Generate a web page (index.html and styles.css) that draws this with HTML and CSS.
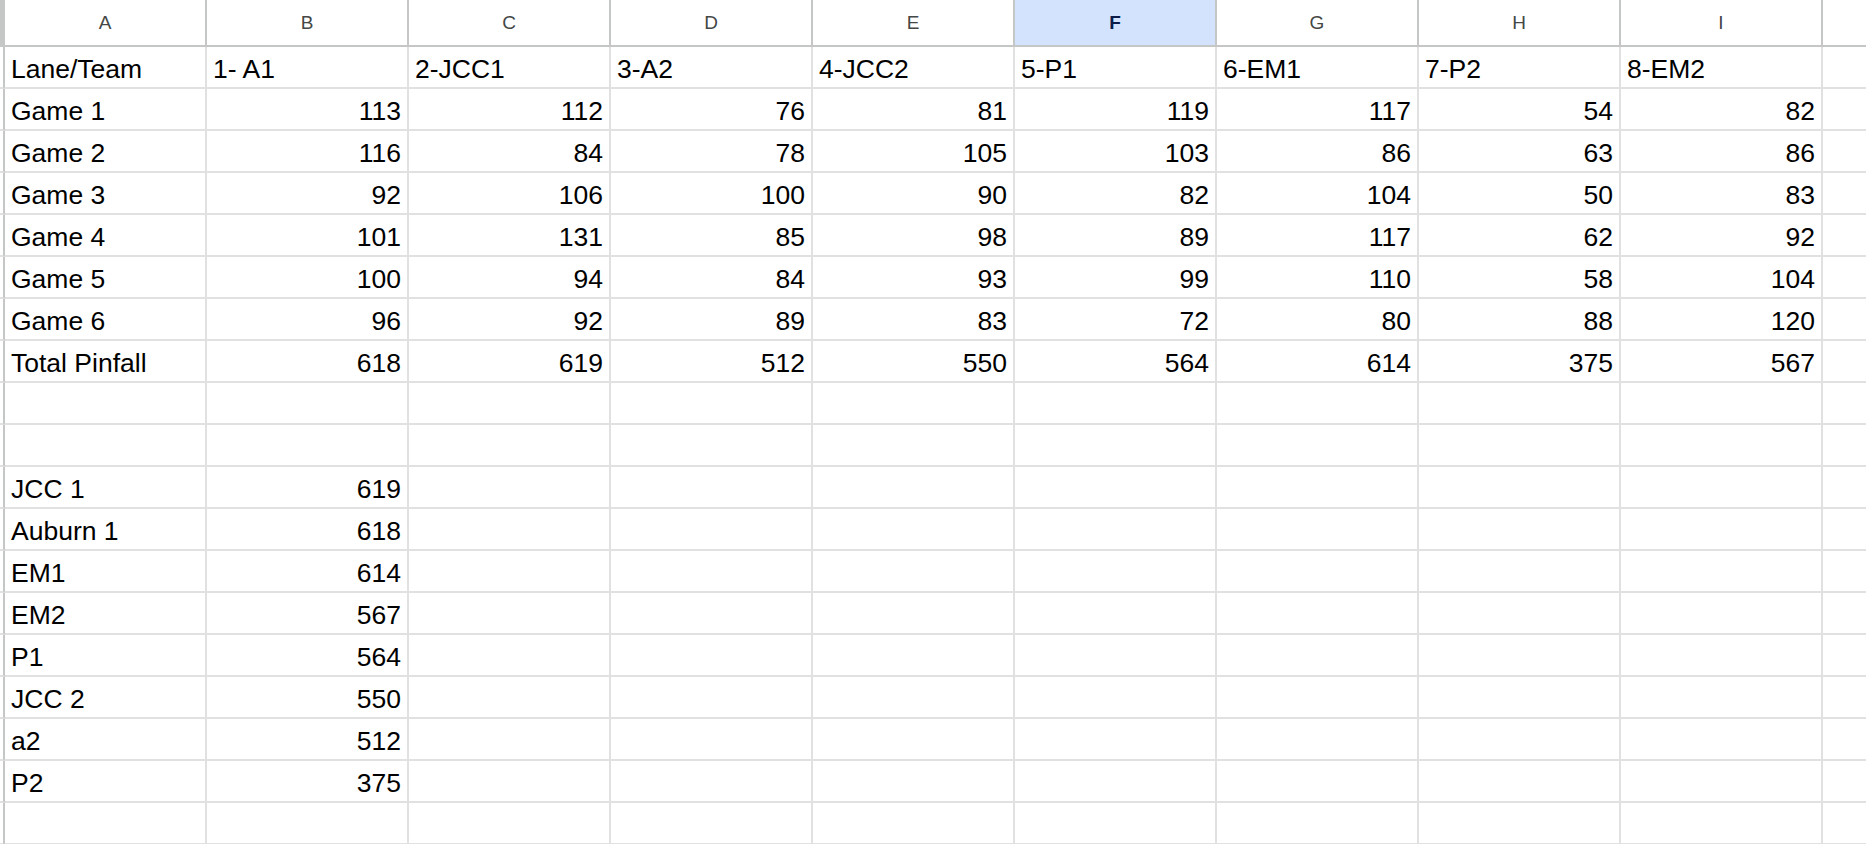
FILE: index.html
```html
<!DOCTYPE html>
<html>
<head>
<meta charset="utf-8">
<link rel="stylesheet" href="styles.css">
</head>
<body>
<div class="sheet">
  <div class="ch corner"></div>
  <div class="ch">A</div><div class="ch">B</div><div class="ch">C</div><div class="ch">D</div><div class="ch">E</div><div class="ch sel">F</div><div class="ch">G</div><div class="ch">H</div><div class="ch">I</div><div class="ch last"></div>

  <div class="rh"></div><div class="c">Lane/Team</div><div class="c">1- A1</div><div class="c">2-JCC1</div><div class="c">3-A2</div><div class="c">4-JCC2</div><div class="c">5-P1</div><div class="c">6-EM1</div><div class="c">7-P2</div><div class="c">8-EM2</div><div class="c last"></div>

  <div class="rh"></div><div class="c">Game 1</div><div class="c n">113</div><div class="c n">112</div><div class="c n">76</div><div class="c n">81</div><div class="c n">119</div><div class="c n">117</div><div class="c n">54</div><div class="c n">82</div><div class="c last"></div>

  <div class="rh"></div><div class="c">Game 2</div><div class="c n">116</div><div class="c n">84</div><div class="c n">78</div><div class="c n">105</div><div class="c n">103</div><div class="c n">86</div><div class="c n">63</div><div class="c n">86</div><div class="c last"></div>

  <div class="rh"></div><div class="c">Game 3</div><div class="c n">92</div><div class="c n">106</div><div class="c n">100</div><div class="c n">90</div><div class="c n">82</div><div class="c n">104</div><div class="c n">50</div><div class="c n">83</div><div class="c last"></div>

  <div class="rh"></div><div class="c">Game 4</div><div class="c n">101</div><div class="c n">131</div><div class="c n">85</div><div class="c n">98</div><div class="c n">89</div><div class="c n">117</div><div class="c n">62</div><div class="c n">92</div><div class="c last"></div>

  <div class="rh"></div><div class="c">Game 5</div><div class="c n">100</div><div class="c n">94</div><div class="c n">84</div><div class="c n">93</div><div class="c n">99</div><div class="c n">110</div><div class="c n">58</div><div class="c n">104</div><div class="c last"></div>

  <div class="rh"></div><div class="c">Game 6</div><div class="c n">96</div><div class="c n">92</div><div class="c n">89</div><div class="c n">83</div><div class="c n">72</div><div class="c n">80</div><div class="c n">88</div><div class="c n">120</div><div class="c last"></div>

  <div class="rh"></div><div class="c">Total Pinfall</div><div class="c n">618</div><div class="c n">619</div><div class="c n">512</div><div class="c n">550</div><div class="c n">564</div><div class="c n">614</div><div class="c n">375</div><div class="c n">567</div><div class="c last"></div>

  <div class="rh"></div><div class="c"></div><div class="c"></div><div class="c"></div><div class="c"></div><div class="c"></div><div class="c"></div><div class="c"></div><div class="c"></div><div class="c"></div><div class="c last"></div>

  <div class="rh"></div><div class="c"></div><div class="c"></div><div class="c"></div><div class="c"></div><div class="c"></div><div class="c"></div><div class="c"></div><div class="c"></div><div class="c"></div><div class="c last"></div>

  <div class="rh"></div><div class="c">JCC 1</div><div class="c n">619</div><div class="c"></div><div class="c"></div><div class="c"></div><div class="c"></div><div class="c"></div><div class="c"></div><div class="c"></div><div class="c last"></div>

  <div class="rh"></div><div class="c">Auburn 1</div><div class="c n">618</div><div class="c"></div><div class="c"></div><div class="c"></div><div class="c"></div><div class="c"></div><div class="c"></div><div class="c"></div><div class="c last"></div>

  <div class="rh"></div><div class="c">EM1</div><div class="c n">614</div><div class="c"></div><div class="c"></div><div class="c"></div><div class="c"></div><div class="c"></div><div class="c"></div><div class="c"></div><div class="c last"></div>

  <div class="rh"></div><div class="c">EM2</div><div class="c n">567</div><div class="c"></div><div class="c"></div><div class="c"></div><div class="c"></div><div class="c"></div><div class="c"></div><div class="c"></div><div class="c last"></div>

  <div class="rh"></div><div class="c">P1</div><div class="c n">564</div><div class="c"></div><div class="c"></div><div class="c"></div><div class="c"></div><div class="c"></div><div class="c"></div><div class="c"></div><div class="c last"></div>

  <div class="rh"></div><div class="c">JCC 2</div><div class="c n">550</div><div class="c"></div><div class="c"></div><div class="c"></div><div class="c"></div><div class="c"></div><div class="c"></div><div class="c"></div><div class="c last"></div>

  <div class="rh"></div><div class="c">a2</div><div class="c n">512</div><div class="c"></div><div class="c"></div><div class="c"></div><div class="c"></div><div class="c"></div><div class="c"></div><div class="c"></div><div class="c last"></div>

  <div class="rh"></div><div class="c">P2</div><div class="c n">375</div><div class="c"></div><div class="c"></div><div class="c"></div><div class="c"></div><div class="c"></div><div class="c"></div><div class="c"></div><div class="c last"></div>

  <div class="rh"></div><div class="c"></div><div class="c"></div><div class="c"></div><div class="c"></div><div class="c"></div><div class="c"></div><div class="c"></div><div class="c"></div><div class="c"></div><div class="c last"></div>
</div>
</body>
</html>
```
FILE: styles.css
```css
html, body {
  margin: 0;
  padding: 0;
  background: #ffffff;
  overflow: hidden;
}

.sheet {
  display: grid;
  grid-template-columns: 5px repeat(9, 202px) 1fr;
  grid-template-rows: 47px;
  grid-auto-rows: 42px;
  width: 1866px;
  height: 844px;
  overflow: hidden;
  font-family: "Liberation Sans", Arial, sans-serif;
}

.ch {
  box-sizing: border-box;
  border-right: 2px solid #c4c7c5;
  border-bottom: 2px solid #c4c7c5;
  display: flex;
  align-items: center;
  justify-content: center;
  font-size: 19px;
  color: #444746;
  background: #ffffff;
}

.ch.corner {
  background: #c4c7c5;
}

.ch.sel {
  background: #d3e3fd;
  color: #0b1d48;
  font-weight: bold;
}

.ch.last,
.c.last {
  border-right: none;
}

.rh {
  box-sizing: border-box;
  border-right: 2px solid #c4c7c5;
  border-bottom: 2px solid #e1e1e1;
  background: #ffffff;
}

.c {
  box-sizing: border-box;
  border-right: 2px solid #e1e1e1;
  border-bottom: 2px solid #e1e1e1;
  display: flex;
  align-items: flex-end;
  justify-content: flex-start;
  padding: 0 6px 3px 6px;
  font-size: 26.5px;
  line-height: 30px;
  color: #000000;
  white-space: nowrap;
  overflow: hidden;
}

.c.n {
  justify-content: flex-end;
}
```
